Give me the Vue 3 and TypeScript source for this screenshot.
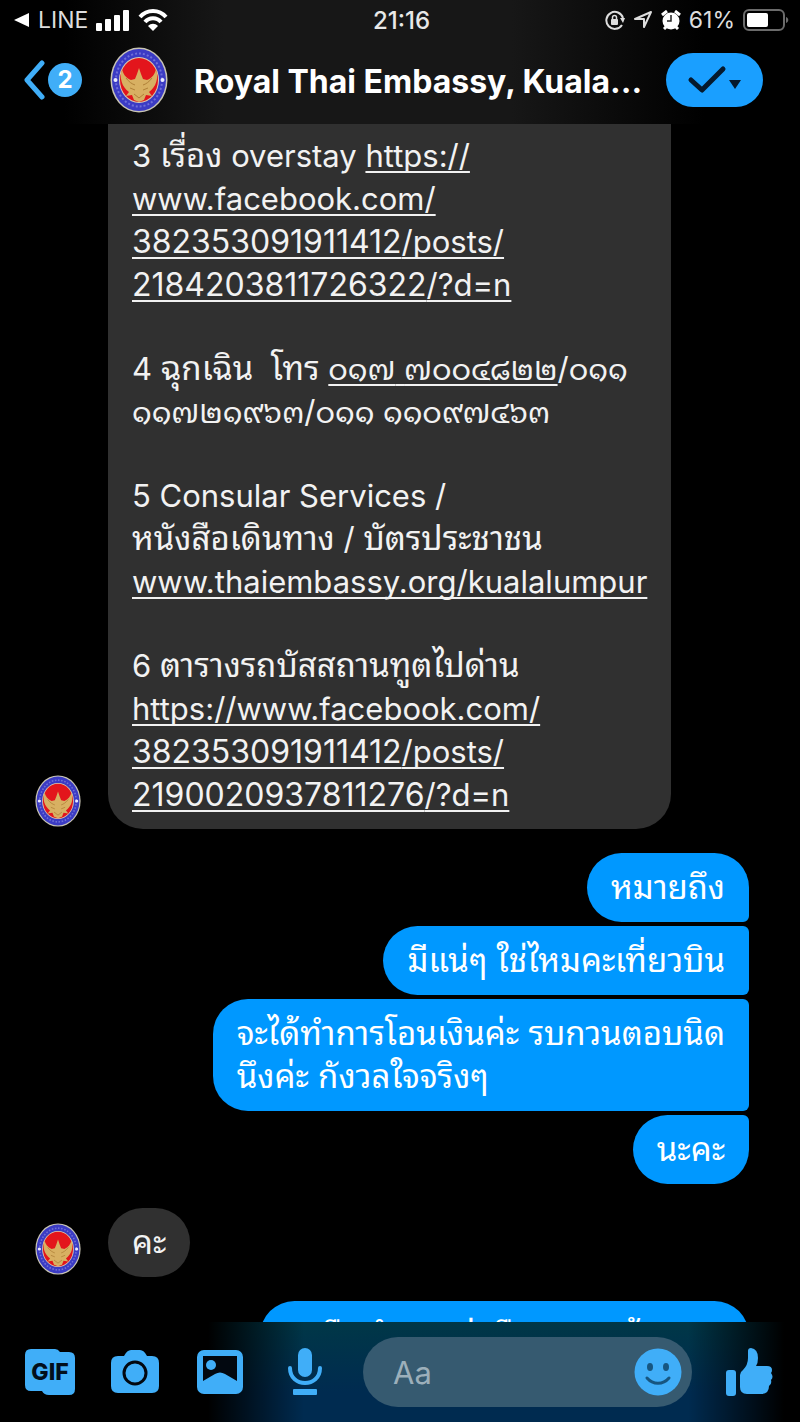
<script setup lang="ts">
interface Chunk { text: string; href?: string }
type Line = Chunk[]

const post = 'https://www.facebook.com/382353091911412/posts/'
const overstay = post + '2184203811726322/?d=n'
const bus = post + '2190020937811276/?d=n'

const paragraphs: Line[][] = [
  [
    [{ text: '3 เรื่อง overstay ' }, { text: 'https://', href: overstay }],
    [{ text: 'www.facebook.com/', href: overstay }],
    [{ text: '382353091911412/posts/', href: overstay }],
    [{ text: '2184203811726322/?d=n', href: overstay }],
  ],
  [
    [{ text: '4 ฉุกเฉิน  โทร ' }, { text: '๐๑๗ ๗๐๐๔๘๒๒', href: 'tel:0177004822' }, { text: '/๐๑๑' }],
    [{ text: '๑๑๗๒๑๙๖๓/๐๑๑ ๑๑๐๙๗๔๖๓' }],
  ],
  [
    [{ text: '5 Consular Services /' }],
    [{ text: 'หนังสือเดินทาง / บัตรประชาชน' }],
    [{ text: 'www.thaiembassy.org/kualalumpur', href: 'http://www.thaiembassy.org/kualalumpur' }],
  ],
  [
    [{ text: '6 ตารางรถบัสสถานทูตไปด่าน' }],
    [{ text: 'https://www.facebook.com/', href: bus }],
    [{ text: '382353091911412/posts/', href: bus }],
    [{ text: '2190020937811276/?d=n', href: bus }],
  ],
]

const sent: string[][] = [
  ['หมายถึง'],
  ['มีแน่ๆ ใช่ไหมคะเที่ยวบิน'],
  ['จะได้ทำการโอนเงินค่ะ รบกวนตอบนิด', 'นึงค่ะ กังวลใจจริงๆ'],
  ['นะคะ'],
]

// Thai letters, Thai numerals and long post numbers each have their own text size.
const runs = (text: string): string[] =>
  text.split(/([\u0E50-\u0E59]+|[\u0E00-\u0E4F]+|[0-9]{8,})/).filter(Boolean)

const runClass = (run: string): string => {
  if (/^[\u0E50-\u0E59]/.test(run)) return 'thai-digits'
  if (/^[\u0E00-\u0E4F]/.test(run)) return 'thai'
  return /^[0-9]{8,}/.test(run) ? 'number' : ''
}
</script>

<template>
  <main class="screen">
    <svg class="defs" aria-hidden="true">
      <symbol id="seal" viewBox="0 0 58 66" preserveAspectRatio="none">
        <ellipse cx="29" cy="33" rx="28.5" ry="32.5" fill="#c9c5b4" />
        <ellipse cx="29" cy="33" rx="27" ry="31" fill="#3b3bc4" />
        <ellipse cx="29" cy="33" rx="23" ry="26.5" fill="none" stroke="#6f6fd8" stroke-width="2" stroke-dasharray="2 2" />
        <circle cx="5.5" cy="33" r="2" fill="#e9e9ff" />
        <circle cx="52.5" cy="33" r="2" fill="#e9e9ff" />
        <ellipse cx="29" cy="33" rx="20" ry="23" fill="#d9cdb0" />
        <ellipse cx="29" cy="33" rx="19" ry="22" fill="#e3151c" />
        <path d="M12 22c-3 9 0 18 7 23l-3 4 6-1 2 5 5 2 5-2 2-5 6 1-3-4c7-5 10-14 7-23-1 5-4 9-9 11l-4-1-2-5-2-6-2 6-2 5-4 1c-5-2-8-6-9-11z" fill="#d8b062" />
        <path d="M16 31c3 4 6 6 9 7M42 31c-3 4-6 6-9 7M20 41l5 2M38 41l-5 2M24 47l5 4 5-4" fill="none" stroke="#b08038" stroke-width="1" />
      </symbol>
    </svg>

    <header class="top">
      <div class="status">
        <div class="status-left">
          <svg width="16" height="16" viewBox="0 0 16 16"><path d="M0 8 15 1v14z" fill="#fff" /></svg>
          <span>LINE</span>
          <svg width="34" height="22" viewBox="0 0 34 22" fill="#fff">
            <rect x="0" y="14" width="6" height="8" rx="1" /><rect x="9" y="10" width="6" height="12" rx="1" />
            <rect x="18" y="6" width="6" height="16" rx="1" /><rect x="27" y="1" width="6" height="21" rx="1" />
          </svg>
          <svg width="30" height="22" viewBox="0 0 30 22">
            <path d="M2 8c7-8 19-8 26 0M7 13c4-5 12-5 16 0" fill="none" stroke="#fff" stroke-width="4" />
            <path d="M10 17c3-3 7-3 10 0l-5 5z" fill="#fff" />
          </svg>
        </div>
        <time class="clock">21:16</time>
        <div class="status-right">
          <svg width="20" height="20" viewBox="0 0 20 20">
            <path d="M17 15A8.5 8.5 0 1 1 18 8" fill="none" stroke="#ddd" stroke-width="2" />
            <path d="M15 8h5l-2 5z" fill="#ddd" /><rect x="6" y="9" width="7" height="6" rx="1" fill="#ddd" />
            <path d="M7.5 10V7.5a2 2 0 0 1 4 0V10" fill="none" stroke="#ddd" stroke-width="1.5" />
          </svg>
          <svg width="20" height="20" viewBox="0 0 20 20"><path d="M2 9 18 2 11 17V9z" fill="none" stroke="#ddd" stroke-width="2" stroke-linejoin="round" /></svg>
          <svg width="20" height="20" viewBox="0 0 20 20">
            <path d="M1 5 6 1M14 1l5 4M3 19l3-3M17 19l-3-3" stroke="#fff" stroke-width="3" />
            <circle cx="10" cy="11" r="8.5" fill="#fff" /><path d="M10 5v6H6" fill="none" stroke="#222" stroke-width="1.5" />
          </svg>
          <span>61%</span>
          <svg width="46" height="22" viewBox="0 0 46 22">
            <rect x="1" y="1" width="40" height="20" rx="5" fill="none" stroke="#6b6b6b" stroke-width="2" />
            <rect x="4" y="4" width="21" height="14" rx="2" fill="#fff" /><path d="M43 8c3 1 3 5 0 6z" fill="#6b6b6b" />
          </svg>
        </div>
      </div>
      <div class="bar">
        <button class="back" aria-label="Back, 2 unread">
          <svg width="22" height="40" viewBox="0 0 22 40"><path d="M19 3 4 20l15 17" fill="none" stroke="#40aef8" stroke-width="5" stroke-linecap="round" stroke-linejoin="round" /></svg>
          <span class="badge">2</span>
        </button>
        <svg class="avatar-large"><use href="#seal" /></svg>
        <h1>Royal Thai Embassy, Kuala...</h1>
        <button class="done" aria-label="Mark as done">
          <svg width="56" height="30" viewBox="0 0 56 30"><path d="m4 15 11 10L36 4" fill="none" stroke="#05192d" stroke-width="5" stroke-linecap="round" stroke-linejoin="round" /><path d="M42 15h12l-6 9z" fill="#05192d" /></svg>
        </button>
      </div>
    </header>

    <section class="chat">
      <div class="row-in">
        <svg class="avatar"><use href="#seal" /></svg>
        <div class="bubble in long">
          <p v-for="(p, i) in paragraphs" :key="i">
            <span v-for="(line, j) in p" :key="j" class="line"><component :is="c.href ? 'a' : 'span'" v-for="(c, k) in line" :key="k" :href="c.href"><span v-for="(run, r) in runs(c.text)" :key="r" :class="runClass(run)">{{ run }}</span></component></span>
          </p>
        </div>
      </div>
      <div class="sent">
        <div v-for="(m, i) in sent" :key="i" class="bubble out thai">
          <span v-for="l in m" :key="l" class="line">{{ l }}</span>
        </div>
      </div>
      <div class="row-in">
        <svg class="avatar"><use href="#seal" /></svg>
        <div class="bubble in thai">คะ</div>
      </div>
      <div class="sent">
        <div class="bubble out thai"><span class="line">ขอยืนทำการ ส่งคืนนะคะแล้วนะคะ</span></div>
      </div>
    </section>

    <footer class="composer">
      <div class="tools">
        <button aria-label="GIF">
          <svg width="52" height="48" viewBox="0 0 52 48"><path d="M7 1h24q3 0 5 3h9q6 0 6 6v31q0 6-6 6H25q-5 0-7-4H7q-6 0-6-6V7q0-6 6-6z" fill="#40aef8" /><text x="26" y="32" text-anchor="middle" class="gif">GIF</text></svg>
        </button>
        <button aria-label="Camera">
          <svg width="50" height="46" viewBox="0 0 50 46"><path d="M8 7h6q3-6 7-6h9q4 0 7 6h5q7 0 7 7v23q0 7-7 7H8q-7 0-7-7V14q0-7 7-7z" fill="#40aef8" /><circle cx="25" cy="24" r="11" fill="none" stroke="#020810" stroke-width="3" /></svg>
        </button>
        <button aria-label="Photos">
          <svg width="48" height="44" viewBox="0 0 48 44"><rect x="1" y="0" width="46" height="44" rx="7" fill="#40aef8" /><path d="M7 6h34v25L29 24q-5-3-10 0L7 31z" fill="#020810" /><circle cx="15" cy="15" r="5" fill="#40aef8" /></svg>
        </button>
        <button aria-label="Voice message">
          <svg width="36" height="48" viewBox="0 0 36 48"><rect x="11" y="0" width="14" height="29" rx="7" fill="#40aef8" /><path d="M3 20c0 20 30 20 30 0" fill="none" stroke="#40aef8" stroke-width="4" stroke-linecap="round" /><rect x="6" y="41" width="24" height="6" rx="1" fill="#40aef8" /></svg>
        </button>
      </div>
      <div class="field">
        <input type="text" placeholder="Aa" aria-label="Message" />
        <button aria-label="Emoji">
          <svg width="48" height="48" viewBox="0 0 48 48"><circle cx="24" cy="24" r="23.5" fill="#40aef8" /><ellipse cx="16" cy="19" rx="3" ry="4" fill="#175680" /><ellipse cx="32" cy="19" rx="3" ry="4" fill="#175680" /><path d="M13 30c6 7 16 7 22 0" fill="none" stroke="#175680" stroke-width="3" stroke-linecap="round" /></svg>
        </button>
      </div>
      <button aria-label="Like">
        <svg width="48" height="50" viewBox="0 0 48 50"><rect x="1" y="23" width="10" height="26" rx="3" fill="#40aef8" /><path d="M15 28q0-3 3-5 5-5 5-12V4q0-3 3-3 7 1 7 10 0 5-2 8h11q5 0 5 4 0 2-1 3 3 4 0 7 1 4-2 6 0 8-8 8H22q-7 0-7-7z" fill="#40aef8" /></svg>
      </button>
    </footer>
  </main>
</template>

<style>
html, body { margin: 0; background: #000; }
</style>

<style scoped>
.screen { height: 100vh; display: flex; flex-direction: column; overflow: hidden; background: #000; color: #fff; font-family: Inter, "Noto Sans Thai Looped", "Noto Looped Thai", Loma, Garuda, "Noto Sans Thai", "Noto Sans", sans-serif; }
.defs { display: none; }
button { border: 0; padding: 0; background: none; color: inherit; font: inherit; display: flex; align-items: center; justify-content: center; }
svg { display: block; flex: none; }
.top { flex: none; height: 124px; background: linear-gradient(90deg, #000 8%, #171717 28%, #171717 64%, #000 88%); }
.status { display: grid; grid-template-columns: 1fr auto 1fr; align-items: center; height: 40px; padding: 0 11px 0 14px; font-size: 23px; }
.status-left, .status-right { display: flex; align-items: center; gap: 8px; color: #ddd; }
.status-right { justify-content: flex-end; }
.clock { font-size: 24px; font-weight: 500; color: #e8e8e8; }
.bar { display: flex; align-items: center; height: 80px; padding: 0 37px 0 23px; }
.back { width: 87px; gap: 3px; flex: none; justify-content: flex-start; }
.badge { width: 34px; height: 34px; line-height: 34px; border-radius: 50%; background: #40aef8; text-align: center; font-size: 24px; font-weight: 700; }
.avatar-large { width: 58px; height: 66px; }
h1 { flex: 1; margin: 0 0 0 26px; padding-top: 4px; font-size: 32px; line-height: 40px; font-weight: 700; white-space: nowrap; }
.done { width: 97px; height: 54px; flex: none; border-radius: 27px; background: #1a9fff; }
.chat { flex: 1; min-height: 0; overflow: hidden; display: flex; flex-direction: column; gap: 24px; padding: 0 51px 0 35px; font-size: 31px; line-height: 43px; }
.row-in { display: flex; align-items: flex-end; gap: 27px; flex: none; }
.avatar { width: 46px; height: 52px; margin-bottom: 2px; }
.bubble { padding: 13px 24px; border-radius: 35px; white-space: pre; }
.in { background: #303030; color: #f2f2f2; }
.long { padding-top: 10px; border-radius: 0 0 35px 35px; }
.thai { font-size: 33px; }
.thai-digits { font-size: 30px; }
.number { font-size: 32px; }
p { margin: 0 0 41px; }
p:last-child { margin: 0; }
.line { display: block; height: 43px; }
a { color: inherit; text-decoration-thickness: 2px; text-underline-offset: 4px; text-decoration-skip-ink: none; }
.sent { display: flex; flex-direction: column; align-items: flex-end; gap: 4px; flex: none; }
.out { background: #0098ff; border-radius: 35px 6px 6px 35px; }
.out:first-child { border-top-right-radius: 35px; }
.out:last-child { border-bottom-right-radius: 35px; }
.composer { flex: none; height: 100px; box-sizing: border-box; display: flex; align-items: center; gap: 33px; padding: 0 27px 0 25px; background: linear-gradient(90deg, #000 26%, transparent 38%, transparent 86%, #000 98%), linear-gradient(#003747, #002b50 70%); }
.tools { display: flex; gap: 35px; }
.tools button { width: 50px; }
.field { flex: 1; min-width: 0; height: 70px; box-sizing: border-box; display: flex; align-items: center; padding: 0 10px 0 30px; border-radius: 35px; background: #365a70; }
input { flex: 1; min-width: 0; border: 0; padding: 0; background: none; outline: 0; color: #fff; font: inherit; font-size: 31px; }
input::placeholder { color: #9cafba; opacity: 1; }
.gif { font-size: 23px; font-weight: 800; fill: #020f1c; }
</style>
